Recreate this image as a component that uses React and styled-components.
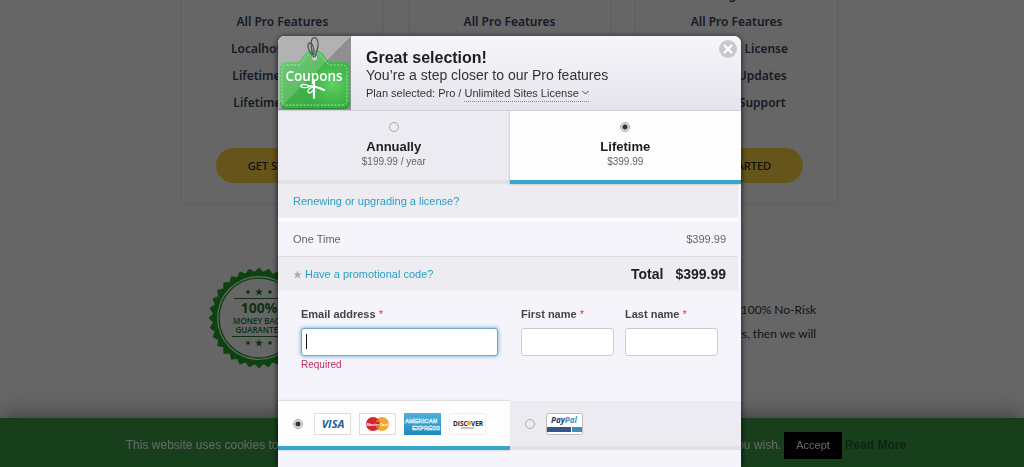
import { useState } from "react"
import styled, { createGlobalStyle, css } from "styled-components"

const PLANS = [
    { id: "single", perks: ["1 Site License", "All Pro Features", "Localhost License", "Lifetime Updates", "Lifetime Support"] },
    { id: "five", perks: ["5 Sites License", "All Pro Features", "Localhost License", "Lifetime Updates", "Lifetime Support"] },
    { id: "unlimited", perks: ["Hosting License", "All Pro Features", "Localhost License", "Lifetime Updates", "Lifetime Support"] },
]

const CYCLES = [
    { id: "annual", name: "Annually", price: "$199.99 / year" },
    { id: "lifetime", name: "Lifetime", price: "$399.99" },
]

export default function App() {
    const [cycle, setCycle] = useState("lifetime")
    const [payment, setPayment] = useState("card")
    const [email, setEmail] = useState("")

    return (
        <>
            <GlobalStyle />
            <Page>
                <Pricing>
                    {PLANS.map((plan) => (
                        <PlanCard key={plan.id}>
                            <PerkList>
                                {plan.perks.map((perk) => (
                                    <li key={perk}>{perk}</li>
                                ))}
                            </PerkList>
                            <StartButton type="button">GET STARTED</StartButton>
                        </PlanCard>
                    ))}
                </Pricing>
                <Guarantee>
                    <GuaranteeSeal />
                    <p>
                        You are fully protected by our 100% No-Risk
                        <br />
                        If you are not happy over the next 30 days, then we will
                    </p>
                </Guarantee>
            </Page>
            <CookieBar>
                <span>
                    This website uses cookies to improve your experience. We will assume you are ok with this, but you can
                    opt-out if you wish.
                </span>
                <AcceptButton type="button">Accept</AcceptButton>
                <ReadMore href="#cookies">Read More</ReadMore>
            </CookieBar>

            <Overlay>
                <Modal role="dialog" aria-label="Checkout">
                    <Header>
                        <CouponsLogo />
                        <HeaderText>
                            <h1>Great selection!</h1>
                            <h2>You’re a step closer to our Pro features</h2>
                            <PlanLine>
                                <label htmlFor="plan">Plan selected: Pro /&nbsp;</label>
                                <PlanPicker>
                                    <select id="plan" defaultValue="unlimited">
                                        <option value="unlimited">Unlimited Sites License</option>
                                        <option value="single">Single Site License</option>
                                    </select>
                                    <svg width="7" height="5" viewBox="0 0 7 5" fill="none" stroke="#444">
                                        <path d="M.5 1 3.5 4l3-3" />
                                    </svg>
                                </PlanPicker>
                            </PlanLine>
                        </HeaderText>
                        <CloseButton type="button" aria-label="Close">
                            <svg width="10" height="10" viewBox="0 0 10 10" stroke="#fff" strokeWidth="2.4">
                                <path d="M1 1l8 8M9 1 1 9" />
                            </svg>
                        </CloseButton>
                    </Header>

                    <Tabs>
                        {CYCLES.map(({ id, name, price }) => (
                            <CycleTab key={id} $active={cycle === id}>
                                <Radio name="cycle" checked={cycle === id} onChange={() => setCycle(id)} />
                                <strong>{name}</strong>
                                <span>{price}</span>
                            </CycleTab>
                        ))}
                    </Tabs>

                    <Row $shaded>
                        <TextLink href="#renew">Renewing or upgrading a license?</TextLink>
                    </Row>
                    <Row $divided>
                        <span>One Time</span>
                        <span>$399.99</span>
                    </Row>
                    <Row $shaded>
                        <Promo>
                            <svg width="9" height="9" viewBox="0 0 24 24" fill="#aaa">
                                <path d="M12 1l3 8h8l-6.500 5 2.500 8.500-7-5-7 5L7.500 14 1 9h8z" />
                            </svg>
                            <TextLink href="#promo">Have a promotional code?</TextLink>
                        </Promo>
                        <Total>
                            <span>Total</span>
                            <span>$399.99</span>
                        </Total>
                    </Row>

                    <Form>
                        <Field>
                            <label htmlFor="email">
                                Email address <em>*</em>
                            </label>
                            <EmailBox>
                                <Input
                                    id="email"
                                    type="email"
                                    $active
                                    value={email}
                                    onChange={(e) => setEmail(e.target.value)}
                                />
                                {!email && <Caret />}
                            </EmailBox>
                            <FieldError>Required</FieldError>
                        </Field>
                        <Names>
                            <Field>
                                <label htmlFor="first">
                                    First name <em>*</em>
                                </label>
                                <Input id="first" type="text" />
                            </Field>
                            <Field>
                                <label htmlFor="last">
                                    Last name <em>*</em>
                                </label>
                                <Input id="last" type="text" />
                            </Field>
                        </Names>
                    </Form>

                    <Tabs>
                        <PaymentTab $active={payment === "card"}>
                            <Radio
                                name="payment"
                                aria-label="Credit card"
                                checked={payment === "card"}
                                onChange={() => setPayment("card")}
                            />
                            <Visa />
                            <MasterCard />
                            <Amex />
                            <Discover />
                        </PaymentTab>
                        <PaymentTab $active={payment === "paypal"}>
                            <Radio
                                name="payment"
                                aria-label="PayPal"
                                checked={payment === "paypal"}
                                onChange={() => setPayment("paypal")}
                            />
                            <PayPal />
                        </PaymentTab>
                    </Tabs>
                </Modal>
            </Overlay>
        </>
    )
}

function CouponsLogo() {
    return (
        <svg width="73" height="74" viewBox="0 0 73 74">
            <defs>
                <linearGradient id="tag" x1="0" y1="0" x2="1" y2="1">
                    <stop offset="0" stopColor="#5fc468" />
                    <stop offset=".5" stopColor="#3fb148" />
                    <stop offset="1" stopColor="#2fa63a" />
                </linearGradient>
                <radialGradient id="glow" cx=".75" cy=".65" r=".5">
                    <stop offset="0" stopColor="#62d466" />
                    <stop offset="1" stopColor="#35ad42" stopOpacity="0" />
                </radialGradient>
                <clipPath id="tagShape">
                    <path d="M8 26h11c5 0 6-12 17-12s12 12 17 12h12q7 0 7 7v32q0 7-7 7H8q-6 0-6-7V33q0-7 6-7z" />
                </clipPath>
            </defs>
            <path fill="#b2b2b2" d="M0 0h73v74H0z" />
            <path fill="#8f8f8f" d="M73 0v74H0z" />
            <path
                fill="#258a30"
                d="M8 28h11c5 0 6-12 17-12s12 12 17 12h12q7 0 7 7v31q0 7-7 7H8q-6 0-6-7V35q0-7 6-7z"
            />
            <g clipPath="url(#tagShape)">
                <path fill="url(#tag)" d="M0 0h73v74H0z" />
                <path fill="url(#glow)" d="M0 0h73v74H0z" />
                <path fill="#fff" opacity=".16" d="M0 0h73L0 74z" />
            </g>
            <path
                fill="none"
                stroke="#a5e3a5"
                strokeDasharray="2 1.500"
                d="M9 29h11c6 0 7-12 16-12s11 12 17 12h11q5 0 5 5v30q0 5-5 5H9q-5 0-5-5V34q0-5 5-5z"
            />
            <circle cx="36.500" cy="22" r="3" fill="#d5d5d5" stroke="#84a986" />
            <g fill="none" stroke="#555" strokeWidth="1.300">
                <path d="M36 22c-3-6-4-18-1-20s6 3 5 8-2 9-3 11" />
                <path d="M34 19c-5-6-5-12-2-12s4 6 4 12" />
            </g>
            <text x="36" y="45" textAnchor="middle" fill="#fff" fontFamily="Open Sans, sans-serif" fontSize="13.500" fontWeight="600">
                Coupons
            </text>
            <g fill="none" stroke="#fff" strokeLinecap="round">
                <path strokeWidth="2.200" d="M36 45v17" />
                <path strokeWidth="2" d="M30 50c6 0 12 2 16 4" />
                <path strokeWidth="1.300" d="M31 50c-3-2-8-2-8 0s5 2 8 1" />
                <path strokeWidth="1.300" d="M36 51c-4 0-7 3-6 5s5 0 6-3" />
            </g>
        </svg>
    )
}

// Scalloped edge: every other point sits on the inner radius
const sealEdge = Array.from({ length: 64 }, (_, i) => {
    const radius = i % 2 ? 45 : 49
    const angle = (i * Math.PI) / 32
    return `${50 + radius * Math.cos(angle)},${50 + radius * Math.sin(angle)}`
}).join(" ")

function GuaranteeSeal() {
    return (
        <svg width="100" height="100" viewBox="0 0 100 100">
            <polygon points={sealEdge} fill="#23a52c" stroke="#23a52c" strokeWidth="2" strokeLinejoin="round" />
            <circle cx="50" cy="50" r="42" fill="#fff" />
            <circle cx="50" cy="50" r="40" fill="none" stroke="#23a52c" strokeWidth="1.400" />
            <g fill="#237a2c" fontFamily="Open Sans, sans-serif" textAnchor="middle">
                <path d="M25 30h50v1H25zM23 68h54v1H23z" />
                <text x="50" y="45" fontSize="14" fontWeight="700">
                    100%
                </text>
                <text x="50" y="56" fontSize="8" fontWeight="600">
                    MONEY BACK
                </text>
                <text x="50" y="65" fontSize="8" fontWeight="600">
                    GUARANTEE
                </text>
                {[24, 75].map((y) => (
                    <g key={y}>
                        <circle cx="39" cy={y} r="1.800" />
                        <path
                            transform={`translate(46.400 ${y - 4}) scale(.8)`}
                            d="M4.500 0l1.300 3.500H9.500L6.500 5.800 7.700 9.500l-3.200-2.200L1.300 9.500l1.200-3.700L-.5 3.500h3.700z"
                        />
                        <circle cx="61" cy={y} r="1.800" />
                    </g>
                ))}
            </g>
        </svg>
    )
}

function Visa() {
    return (
        <CardIcon viewBox="0 0 37 22" role="img" aria-label="Visa">
            <rect x=".5" y=".5" width="36" height="21" fill="#fff" stroke="#ddd" />
            <text x="19" y="15" textAnchor="middle" fill="#1f5b9b" fontFamily="Open Sans, sans-serif" fontSize="11" fontWeight="700" fontStyle="italic">
                VISA
            </text>
        </CardIcon>
    )
}

function MasterCard() {
    return (
        <CardIcon viewBox="0 0 37 22" role="img" aria-label="MasterCard">
            <rect x=".5" y=".5" width="36" height="21" fill="#fff" stroke="#ddd" />
            <circle cx="23" cy="11" r="7" fill="#f3a72e" />
            <circle cx="14" cy="11" r="7" fill="#d22630" />
            <path stroke="#f3a72e" d="M17 8h4M17 14h4" />
            <text x="18.500" y="12.500" textAnchor="middle" fill="#fff" fontFamily="Liberation Sans, sans-serif" fontSize="4" fontWeight="700" fontStyle="italic">
                MasterCard
            </text>
        </CardIcon>
    )
}

function Amex() {
    return (
        <CardIcon viewBox="0 0 37 22" role="img" aria-label="American Express">
            <defs>
                <linearGradient id="amex" x1="0" y1="0" x2="0" y2="1">
                    <stop offset="0" stopColor="#4fb2dc" />
                    <stop offset="1" stopColor="#1f88bb" />
                </linearGradient>
            </defs>
            <path fill="url(#amex)" d="M0 0h37v22H0z" />
            <g fill="#3a9fce" stroke="#e9f7fd" strokeWidth=".5" fontFamily="Liberation Sans, sans-serif" fontSize="6" fontWeight="700">
                <text x="1" y="10">
                    AMERICAN
                </text>
                <text x="8" y="17">
                    EXPRESS
                </text>
            </g>
        </CardIcon>
    )
}

function Discover() {
    return (
        <CardIcon viewBox="0 0 37 22" role="img" aria-label="Discover">
            <rect x=".5" y=".5" width="36" height="21" fill="#fff" stroke="#eee" />
            <g fill="#222" fontFamily="Open Sans, sans-serif" fontSize="6.500" fontWeight="700">
                <text x="4" y="12.500">
                    DISC
                </text>
                <text x="22" y="12.500">
                    VER
                </text>
            </g>
            <circle cx="20" cy="10" r="2.200" fill="#f0a63c" />
            <path stroke="#888" d="M12 15h13" />
        </CardIcon>
    )
}

function PayPal() {
    return (
        <CardIcon viewBox="0 0 37 22" role="img" aria-label="PayPal">
            <rect x=".5" y=".5" width="36" height="21" rx="2" fill="#fff" stroke="#bbb" />
            <path fill="#375488" d="M1 14h24v5H1z" />
            <path fill="#3c8db8" d="M26 14h10v5H26z" />
            <text x="5" y="10" fill="#253b70" fontFamily="Open Sans, sans-serif" fontSize="8" fontWeight="700" fontStyle="italic">
                Pay<tspan fill="#3a8fc0">Pal</tspan>
            </text>
        </CardIcon>
    )
}

const GlobalStyle = createGlobalStyle`
    * {
        box-sizing: border-box;
    }

    html,
    body {
        height: 100%;
        margin: 0;
        overflow: hidden;
        background: #fff;
    }

    h1,
    h2,
    p,
    ul {
        margin: 0;
        padding: 0;
    }

    button,
    input,
    select {
        font-family: inherit;
    }
`

const Page = styled.main`
    display: flex;
    flex-direction: column;
    align-items: center;
    gap: 64px;
    padding-right: 5px;
`

const Pricing = styled.section`
    display: grid;
    grid-template-columns: repeat(3, 1fr);
    gap: 24px;
    width: 64.5%;
    margin-top: -40px;
    font-family: "Noto Sans", "Open Sans", sans-serif;
`

const PlanCard = styled.div`
    display: flex;
    flex-direction: column;
    align-items: center;
    gap: 32px;
    padding: 20px 0;
    border: 1px solid #f1f1f1;
    border-radius: 6px;
    box-shadow: 0 1px 4px rgba(0, 0, 0, 0.06);
`

const PerkList = styled.ul`
    list-style: none;
    text-align: center;
    font-size: 12px;
    font-weight: 600;
    line-height: 27px;
    color: #354760;
`

const StartButton = styled.button`
    width: 132px;
    height: 35px;
    border: 0;
    border-radius: 18px;
    background: #fdd542;
    color: #222;
    font-size: 11px;
    font-weight: 500;
`

const Guarantee = styled.section`
    display: flex;
    justify-content: space-between;
    width: 60%;
    margin-left: 6px;
    padding: 0 2px;

    p {
        padding-top: 30px;
        font: 12px/24px Lato, sans-serif;
        text-align: right;
        color: #333;
    }
`

const CookieBar = styled.aside`
    position: fixed;
    bottom: 0;
    left: 0;
    right: 0;
    display: flex;
    align-items: center;
    justify-content: center;
    gap: 3px;
    height: 49px;
    padding: 5px 0 0 8px;
    background: #3a9f48;
    box-shadow: 0 0 24px rgba(0, 0, 0, 0.5);
    color: #fff;
    font: 12px "Liberation Sans", Arial, sans-serif;
    white-space: nowrap;
`

const AcceptButton = styled.button`
    height: 27px;
    padding: 0 12px;
    border: 0;
    background: #000;
    color: #fff;
    font-size: 11px;
`

const ReadMore = styled.a`
    color: #28552c;
    font-weight: 700;
    text-decoration: none;
`

const Overlay = styled.div`
    position: fixed;
    inset: 0;
    display: flex;
    justify-content: center;
    align-items: flex-start;
    padding: 36px 5px 0 0;
    background: rgba(0, 0, 0, 0.6);
    font-family: "Liberation Sans", Arial, sans-serif;
    font-size: 11px;
    color: #666;
`

const Modal = styled.div`
    width: 463px;
    max-width: 100%;
    min-height: 100%;
    overflow: hidden;
    border-radius: 7px 7px 0 0;
    background: #f5f4fa;
    box-shadow: 0 1px 6px rgba(0, 0, 0, 0.8);
`

const Header = styled.header`
    position: relative;
    display: flex;
    gap: 15px;
    border-bottom: 1px solid #d0d0da;
    background: linear-gradient(#f7f6fb, #e5e4ec);
`

const HeaderText = styled.div`
    padding-top: 13px;
    color: #333;

    h1 {
        font-size: 16px;
        line-height: 18px;
        color: #1c1c22;
    }

    h2 {
        font-size: 14px;
        font-weight: 400;
        line-height: 17px;
    }
`

const PlanLine = styled.div`
    display: flex;
    line-height: 18px;
`

const PlanPicker = styled.div`
    display: flex;
    align-items: center;
    gap: 3px;
    border-bottom: 1px dotted #888;

    select {
        appearance: none;
        field-sizing: content;
        padding: 0;
        border: 0;
        background: none;
        color: inherit;
        font-size: 11px;
    }
`

const CloseButton = styled.button`
    position: absolute;
    top: 4px;
    right: 4px;
    display: flex;
    align-items: center;
    justify-content: center;
    width: 18px;
    height: 18px;
    padding: 0;
    border: 0;
    border-radius: 50%;
    background: #c9c9cc;
`

const Tabs = styled.div`
    display: grid;
    grid-template-columns: 1fr 1fr;
`

const tab = css`
    background: ${(props) => (props.$active ? "#fdfdfe" : "#ecebf1")};
    border-bottom: ${(props) => (props.$active ? "4px solid #38a5cd" : "4px solid #e2e1e6")};
    box-shadow: ${(props) => (props.$active ? "0 0 2px rgba(0, 0, 0, 0.3)" : "none")};
`

const CycleTab = styled.label`
    ${tab}
    display: flex;
    flex-direction: column;
    align-items: center;
    padding: 11px 0 12px;

    strong {
        margin-top: 6px;
        font-size: 13px;
        line-height: 17px;
        color: #1c1c22;
    }

    span {
        font-size: 10px;
        line-height: 13px;
    }
`

const PaymentTab = styled.label`
    ${tab}
    display: flex;
    align-items: center;
    gap: 8px;
    height: 49px;
    padding-left: 15px;
`

const Radio = styled.input.attrs({ type: "radio" })`
    appearance: none;
    flex: none;
    width: 10px;
    height: 10px;
    margin: 0;
    border: 1px solid #aaa;
    border-radius: 50%;
    background: #ececec;

    &:checked {
        background: radial-gradient(#333 2px, #ddd 3px);
    }

    ${PaymentTab} & {
        margin-right: 3px;
    }
`

const Row = styled.div`
    display: flex;
    align-items: center;
    justify-content: space-between;
    height: ${(props) => (props.$divided ? "39px" : "34px")};
    margin-right: 3px;
    padding: 0 12px 0 15px;
    background: ${(props) => (props.$shaded ? "#edecf1" : "transparent")};
    border-top: ${(props) => (props.$divided ? "3px solid #fbfbfe" : "0")};
    border-bottom: ${(props) => (props.$divided ? "1px solid #dddde2" : "0")};
`

const TextLink = styled.a`
    color: #279fc6;
    text-decoration: none;
`

const Promo = styled.div`
    display: flex;
    align-items: center;
    gap: 3px;
`

const Total = styled.div`
    display: flex;
    gap: 12px;
    font-size: 14px;
    font-weight: 700;
    color: #222;
`

const Form = styled.form`
    display: grid;
    grid-template-columns: 1fr 1fr;
    gap: 23px;
    height: 110px;
    padding: 16px 23px 0;
`

const Names = styled.div`
    display: grid;
    grid-template-columns: 1fr 1fr;
    gap: 11px;
`

const Field = styled.div`
    label {
        display: block;
        margin-bottom: 6px;
        line-height: 15px;
        font-weight: 700;
        color: #444;
    }

    em {
        font-style: normal;
        font-weight: 400;
        color: #d0355f;
    }
`

const Input = styled.input`
    display: block;
    width: 100%;
    height: 28px;
    padding: 0 6px;
    border: 1px solid ${(props) => (props.$active ? "#72a9c9" : "#ccccd6")};
    border-radius: 3px;
    outline: 0;
    background: #fff;
    box-shadow: ${(props) => (props.$active ? "0 0 4px #5aa3d6" : "none")};
`

const EmailBox = styled.div`
    position: relative;
`

const Caret = styled.span`
    position: absolute;
    top: 6px;
    left: 5px;
    width: 1px;
    height: 15px;
    background: #111;
`

const FieldError = styled.div`
    margin-top: 3px;
    font-size: 10px;
    line-height: 12px;
    color: #c52b62;
`

const CardIcon = styled.svg`
    flex: none;
    width: 37px;
    height: 22px;
`
